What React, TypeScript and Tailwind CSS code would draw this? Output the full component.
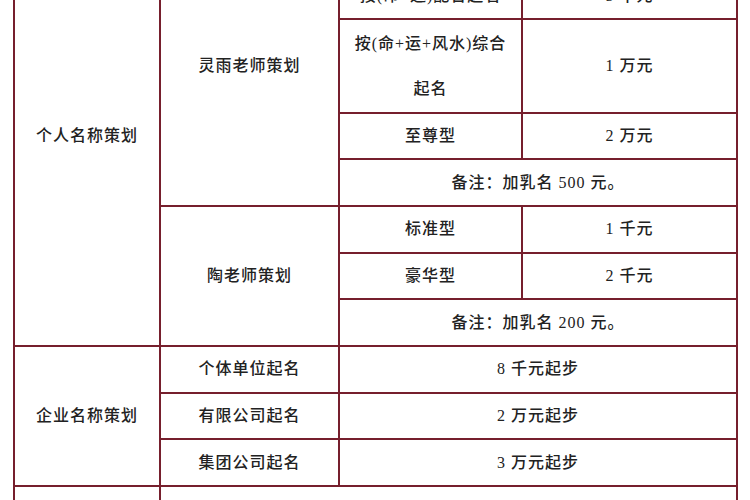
import { ReactNode } from "react";

// One white cell of the price table; grid gaps on the maroon backdrop draw the rules
const Cell = ({ className, children }: { className: string; children?: ReactNode }): ReactNode => (
    <div className={`flex items-center justify-center bg-white text-center ${className}`}>
        {children}
    </div>
);

const App = (): ReactNode => {
    return (
        <div className="w-[750px] h-[500px] overflow-hidden bg-white">
            <div
                className="grid grid-cols-[144px_177px_181px_213px] grid-rows-[repeat(13,44.67px)] gap-[2px] p-[2px]
                bg-[#761f2d] w-fit ml-[13px] -mt-[75px] text-[16px] tracking-[1px] text-[#222] font-medium
                font-['Liberation_Serif','Noto_Sans_CJK_SC',serif]"
            >
                {/* Personal naming block */}
                <Cell className="col-start-1 row-start-1 row-span-9">个人名称策划</Cell>

                <Cell className="col-start-2 row-start-1 row-span-6">灵雨老师策划</Cell>
                <Cell className="col-start-3 row-start-1">标准型</Cell>
                <Cell className="col-start-4 row-start-1">3 千元</Cell>
                <Cell className="col-start-3 row-start-2">按(命+运)配合起名</Cell>
                <Cell className="col-start-4 row-start-2">5 千元</Cell>
                <Cell className="col-start-3 row-start-3 row-span-2 leading-[45px]">
                    <span>按(命+运+风水)综合<br />起名</span>
                </Cell>
                <Cell className="col-start-4 row-start-3 row-span-2">1 万元</Cell>
                <Cell className="col-start-3 row-start-5">至尊型</Cell>
                <Cell className="col-start-4 row-start-5">2 万元</Cell>
                <Cell className="col-start-3 col-span-2 row-start-6">备注：加乳名 500 元。</Cell>

                <Cell className="col-start-2 row-start-7 row-span-3">陶老师策划</Cell>
                <Cell className="col-start-3 row-start-7">标准型</Cell>
                <Cell className="col-start-4 row-start-7">1 千元</Cell>
                <Cell className="col-start-3 row-start-8">豪华型</Cell>
                <Cell className="col-start-4 row-start-8">2 千元</Cell>
                <Cell className="col-start-3 col-span-2 row-start-9">备注：加乳名 200 元。</Cell>

                {/* Company naming block */}
                <Cell className="col-start-1 row-start-10 row-span-3">企业名称策划</Cell>
                <Cell className="col-start-2 row-start-10">个体单位起名</Cell>
                <Cell className="col-start-3 col-span-2 row-start-10">8 千元起步</Cell>
                <Cell className="col-start-2 row-start-11">有限公司起名</Cell>
                <Cell className="col-start-3 col-span-2 row-start-11">2 万元起步</Cell>
                <Cell className="col-start-2 row-start-12">集团公司起名</Cell>
                <Cell className="col-start-3 col-span-2 row-start-12">3 万元起步</Cell>

                {/* Last row, mostly below the fold */}
                <Cell className="col-start-1 row-start-13">产品起名</Cell>
                <Cell className="col-start-2 col-span-3 row-start-13">5 千元起步</Cell>
            </div>
        </div>
    );
};

export default App;
